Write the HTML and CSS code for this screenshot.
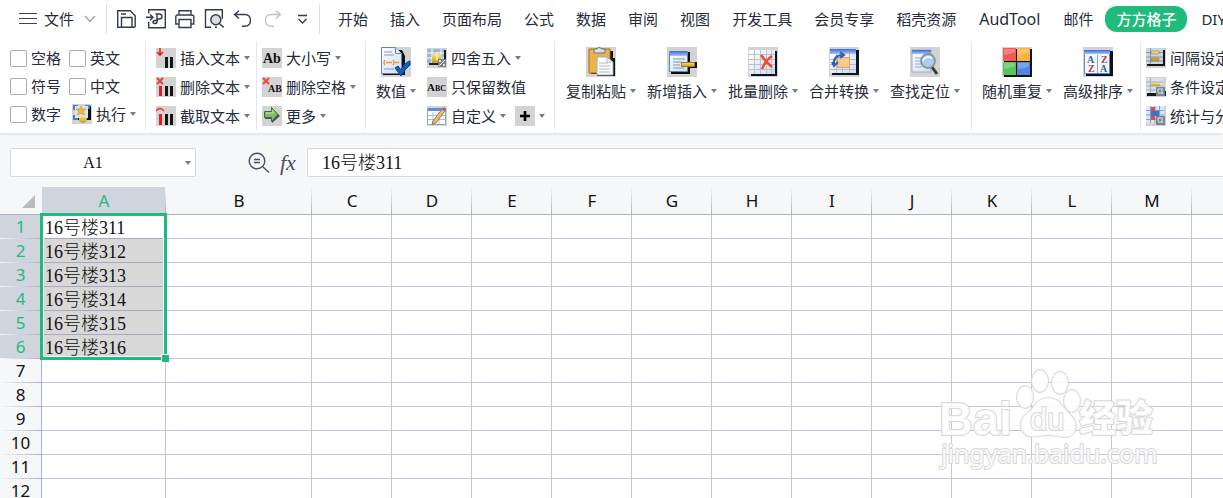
FILE: index.html
```
<!DOCTYPE html>
<html lang="zh-CN">
<head>
<meta charset="utf-8">
<title>表格 - 方方格子</title>
<link rel="stylesheet" href="styles.css">
</head>
<body>
<svg class="defs" aria-hidden="true">
  <defs>
    <linearGradient id="blue" x1="0" y1="0" x2="0" y2="1"><stop offset="0" stop-color="#3a68d8"/><stop offset="1" stop-color="#a8c6fa"/></linearGradient>
    <linearGradient id="paper" x1="0" y1="0" x2="1" y2="1"><stop offset="0" stop-color="#fff"/><stop offset="1" stop-color="#cfdcf0"/></linearGradient>
    <linearGradient id="gold" x1="0" y1="0" x2="0" y2="1"><stop offset="0" stop-color="#fbe27a"/><stop offset="1" stop-color="#c99a1c"/></linearGradient>
  </defs>
</svg>
<header class="app-top">
  <nav class="menu-bar">
    <button class="file-button">
      <svg width="18" height="14" viewBox="0 0 18 14"><path d="M0 1.500h18M0 6.500h18M0 11.500h18" stroke="#40434c" stroke-width="1.2"/></svg>
      <span>文件</span>
      <svg class="file-chevron" width="12" height="8" viewBox="0 0 12 8" fill="none"><path d="M1 1l5 5.500l5-5.500" stroke="#9a9da4" stroke-width="1.200"/></svg>
    </button>
    <div class="quick-tools">
      <button aria-label="保存"><svg viewBox="0 0 20 20"><path d="M.7 1.700h12.500l5 5v10.300q0 1.300-1.300 1.300H.7z M4.500 18V8.500h10.500V18M4 5h5"/></svg></button>
      <button aria-label="输出为PDF"><svg viewBox="0 0 20 20"><path d="M2.700 4.500V.7h16.600v18H2.700v-6M0 8.300h6M4 5.500l3 2.800l-3 2.900M9.500 5h3.500q3 0 3 2.500t-3 2.500h-2v3q0 1.500-2 1.500t-2-1.500t2-1.500h3M11 10V5"/></svg></button>
      <button aria-label="打印"><svg viewBox="0 0 20 20"><path d="M4 6V1.700h12V6M4 15H.8V8q0-2 2-2h14q2 0 2 2v7H16M4 10.500h12v8H4z"/></svg></button>
      <button aria-label="打印预览"><svg viewBox="0 0 20 20"><path d="M7 18.300H1.500V.8h16.800v9M13 18.300h-2"/><circle cx="11.800" cy="10.800" r="5" fill="#d9dde2"/><path d="M15.400 14.400l4.200 4"/></svg></button>
      <button aria-label="撤销"><svg viewBox="0 0 20 20"><path d="M6 1.800L1.500 5.500L6 9.500M2 5.500h9.500q6 0 6 5.800t-6 6H9"/></svg></button>
      <button aria-label="恢复" class="is-off"><svg viewBox="0 0 20 20"><path d="M14 1.800l4.500 3.700L14 9.500M18 5.500H9.500q-6 0-6 5.800t6 6H12"/></svg></button>
      <button aria-label="更多工具"><svg viewBox="0 0 20 20"><path d="M7 6.500h9M7.500 10l4 4l4-4"/></svg></button>
    </div>
    <div class="tabs">
      <button>开始</button><button>插入</button><button>页面布局</button><button>公式</button><button>数据</button><button>审阅</button><button>视图</button><button>开发工具</button><button>会员专享</button><button>稻壳资源</button><button class="latin">AudTool</button><button>邮件</button><button class="active">方方格子</button><button>DIY工具箱</button>
    </div>
  </nav>
  <div class="ribbon">
    <section class="group checks">
      <label><input type="checkbox">空格</label><label><input type="checkbox">英文</label>
      <label><input type="checkbox">符号</label><label><input type="checkbox">中文</label>
      <label><input type="checkbox">数字</label>
      <button class="small drop"><svg class="ico" viewBox="0 0 20 20"><path fill="#111" d="M3 2h16v14H3z"/><path fill="#4b82b8" d="M1 1h5v5H1zM13 1h5v4h-5zM1 11h5v5H1z"/><path fill="#cfe6f6" d="M3 2h13v12H3z"/><path fill="#f6b23c" stroke="#e78b22" stroke-width=".6" d="M9 2l1.500 3h3.500l-2.500 2.500l1 3.500L9 9.500l-3.500 1.500l1-3.500L4 5h3.500z"/><path fill="url(#gold)" d="M7 14l4-2l4 2l-1 4l-4 1l-3-2z"/></svg><span>执行</span></button>
    </section>
    <section class="group stack text-tools">
      <button class="small drop"><svg class="ico" viewBox="0 0 20 20"><path d="M9 9h3v11H9zM14 9h3v11h-3z" fill="#151515"/><path d="M4 0v7M1 4l3 3l3-3" fill="none" stroke="#ff1717" stroke-width="1.600"/></svg><span>插入文本</span></button>
      <button class="small drop"><svg class="ico" viewBox="0 0 20 20"><path d="M9 9h3v10H9zM14 9h3v10h-3z" fill="#151515"/><path d="M3 9h3v10H3z" fill="#e21d2b"/><path d="M1 1l6 6M7 1L1 7" stroke="#ee4338" stroke-width="2.200"/></svg><span>删除文本</span></button>
      <button class="small drop"><svg class="ico" viewBox="0 0 20 20"><path d="M9 8h3v11H9zM14 8h3v11h-3z" fill="#151515"/><path d="M3 8h3v11H3z" fill="#e21d2b"/><path d="M0 5q4-5 8 0" fill="none" stroke="#ff2626" stroke-width="1.500"/></svg><span>截取文本</span></button>
    </section>
    <section class="group stack case-tools">
      <button class="small drop"><svg class="ico" viewBox="0 0 20 20"><text class="glyph" x="1" y="15" font-size="14">Ab</text></svg><span>大小写</span></button>
      <button class="small drop"><svg class="ico" viewBox="0 0 20 20"><path d="M1 1l6 6M7 1L1 7" stroke="#f14a43" stroke-width="2.200"/><text class="glyph" x="6" y="15" font-size="10">AB</text></svg><span>删除空格</span></button>
      <button class="small drop"><svg class="ico" viewBox="0 0 20 20"><path d="M3 7h7V3l8 7l-8 7v-4H3z" fill="#46545a"/><path d="M2.500 5.500h7v-4l6.500 7l-6.500 7v-4h-7z" fill="#81bd68" stroke="#3c6842"/><path d="M4 7h7V4" fill="none" stroke="#c3e8ad"/></svg><span>更多</span></button>
    </section>
    <section class="group value-tools">
      <button class="large drop"><svg class="ico" viewBox="0 0 30 30"><path fill="#111" d="M3 3h18l3 6v19H2z"/><path fill="url(#paper)" stroke="#5f83bf" d="M.5.500h14l6 6v20H.5z"/><path fill="#e6efff" stroke="#6688b8" d="M14.500.5v6h6"/><path d="M3 5h8M3 8h10M3 22h10" stroke="#7d9cd0"/><path d="M4 13q-2 2.500 0 5M12 13q2 2.500 0 5M5 15.500h6M14 15.500h4" fill="none" stroke="#e99a40" stroke-width="1.500"/><path fill="#175dbd" stroke="#0d3f8d" d="M14 21l3-2l3 4q4-8 9-9v4q-5 4-9 11z"/></svg><span>数值</span></button>
      <div class="stack">
        <button class="small drop"><svg class="ico" viewBox="0 0 20 20"><path d="M2 2h17v15H2z" fill="#202020"/><path d="M0 1h17v14H0z" fill="#9db8d2"/><path d="M0 5h17M0 10h17M5 1v14M14 1v14" stroke="#fff"/><path d="M5 6h9v9H5z" fill="url(#gold)"/><path d="M9 4h2v8H9z" fill="#f6e9a4"/><path d="M11 11h8v8h-8z" fill="#76808b"/><path d="M12 18l6-6" stroke="#fff"/><circle cx="13" cy="13" r="1" fill="#fff"/><circle cx="17" cy="17" r="1" fill="#fff"/></svg><span>四舍五入</span></button>
        <button class="small"><svg class="ico" viewBox="0 0 20 20"><text class="glyph" x="0" y="14"><tspan font-size="11">A</tspan><tspan font-size="8">BC</tspan></text></svg><span>只保留数值</span></button>
        <div class="pair">
          <button class="small drop"><svg class="ico" viewBox="0 0 20 20"><path fill="#fff" stroke="#8fa8cb" d="M.5 2.500h18v16H.5z"/><path fill="#628bd9" d="M1 2h18v3H1z"/><path d="M1 9.500h17M1 13.500h17M6 6v12M12 6v12" stroke="#a9bddb"/><path d="M6 15L15 3l3 2L9 17l-4 1z" fill="#e9b96c" stroke="#795b3a" stroke-width=".7"/><path d="M15 3l2-2l2 2l-1 2z" fill="#b96166"/></svg><span>自定义</span></button>
          <button class="small drop plus" aria-label="添加"><svg class="ico" viewBox="0 0 20 20"><path d="M5 10h10M10 5v10" stroke="#000" stroke-width="2.600"/></svg></button>
        </div>
      </div>
    </section>
    <section class="group large-tools">
      <button class="large drop"><svg class="ico" viewBox="0 0 30 30"><path d="M5 4h22v7h2v18H11v-2H5z" fill="#111"/><path d="M3 2h21v24H3z" fill="#edb34a" stroke="#a96f16"/><path d="M8 2h3q1-3 5 0h3v4H8z" fill="#d9e0e5" stroke="#68737b"/><path d="M11 10h10l6 5v13H11z" fill="#fff" stroke="#9baaba"/><path d="M21 10v5h6M13 16h9M13 19h11M13 22h11M13 25h11" fill="none" stroke="#aeb8c7"/></svg><span>复制粘贴</span></button>
      <button class="large drop"><svg class="ico" viewBox="0 0 30 30"><path d="M4 5h19v10h7v6h-7v6H4z" fill="#111"/><path d="M2.500 4.500h18v20h-18z" fill="url(#paper)" stroke="#6583b9"/><path d="M3 4h17v5H3z" fill="url(#blue)"/><path d="M6 12h12M6 15h9M6 18h7M6 21h11" stroke="#8599b7"/><path d="M14.500 15.500h13v4h-13z" fill="url(#gold)" stroke="#9e8019"/></svg><span>新增插入</span></button>
      <button class="large drop"><svg class="ico" viewBox="0 0 30 30"><path d="M3 4h26v25H3z" fill="#10131b"/><path d="M1 3h26v24H1z" fill="url(#paper)"/><path d="M1 7.500h26M1 12.500h26M1 17.500h26M1 22.500h26M6.500 3v24M12.500 3v24M18.500 3v24M23.500 3v24" stroke="#b9c1cc"/><path d="M13 8q5 7 11 12M24 9q-7 5-10 13" fill="none" stroke="#f24a2d" stroke-width="2.500"/></svg><span>批量删除</span></button>
      <button class="large drop"><svg class="ico" viewBox="0 0 30 30"><path d="M3 3h27v25H3z" fill="#10131b"/><path d="M1 2h26v24H1z" fill="url(#paper)"/><path d="M1 2h26v5H1z" fill="url(#blue)"/><path d="M1 12.500h26M1 17.500h26M1 22.500h26M7.500 7v19M13.500 7v19M20.500 7v19" stroke="#a7bcde"/><path d="M8.500 10.500h12v10h-12z" fill="#f7c98e" stroke="#e7a050"/><path d="M5 18q-1-10 9-10M3 15l2 4l4-4M11 5l4 3l-4 3" fill="none" stroke="#315fae" stroke-width="2"/></svg><span>合并转换</span></button>
      <button class="large drop"><svg class="ico" viewBox="0 0 30 30"><path d="M2 3h19v22H2z" fill="url(#paper)" stroke="#9dacc4"/><path d="M2 3h19v4H2z" fill="url(#blue)"/><path d="M5 11h7M5 14h6M5 17h6M5 20h7" stroke="#8caade"/><path d="M22 20l5 7" stroke="#353b3d" stroke-width="3"/><circle cx="18" cy="14" r="7" fill="#aaccef" stroke="#889596" stroke-width="1.800"/><path d="M13 14q2-6 9-3" fill="none" stroke="#edf8ff" stroke-width="2"/></svg><span>查找定位</span></button>
    </section>
    <section class="group large-tools">
      <button class="large drop"><svg class="ico" viewBox="0 0 30 30"><path d="M2 2h28v28H2z" fill="#17130a"/><path d="M1 1h13v13H1z" fill="#f15b53"/><path d="M15 1h13v13H15z" fill="#f8b43e"/><path d="M1 15h13v13H1z" fill="#54c65a"/><path d="M15 15h13v13H15z" fill="#4d86e5"/><path d="M2 2h11v3q-5 3-11 3zM16 2h11v3q-5 3-11 3zM2 16h11v3q-5 3-11 3zM16 16h11v3q-5 3-11 3z" fill="#fff" opacity=".24"/></svg><span>随机重复</span></button>
      <button class="large drop"><svg class="ico" viewBox="0 0 30 30"><path d="M3 4h27v25H3z" fill="#10131b"/><path d="M1.500 3.500h25v23h-25z" fill="#f3f8ff" stroke="#688ac0"/><path d="M1 3h26v4H1z" fill="url(#blue)"/><path d="M14.500 8v18" stroke="#8aa6ce"/><g class="sort-glyph" font-size="10"><text x="4" y="16" fill="#365e9e">A</text><text x="5" y="25" fill="#a94148">Z</text><text x="18" y="16" fill="#a94148">Z</text><text x="17" y="25" fill="#365e9e">A</text></g></svg><span>高级排序</span></button>
    </section>
    <section class="group stack settings">
      <button class="small drop"><svg class="ico" viewBox="0 0 20 20"><path d="M2 2h17v16H1z" fill="#171717"/><path d="M0 0h17v16H0z" fill="#c8d5e6"/><path d="M0 4.500h17M0 9h17M0 13h17M4.500 0v16" stroke="#8294ac"/><path d="M5 3h8v3H5zM5 10h8v3H5z" fill="url(#gold)" stroke="#8d7727" stroke-width=".5"/></svg><span>间隔设定</span></button>
      <button class="small drop"><svg class="ico" viewBox="0 0 20 20"><path d="M1 14h19v5H1z" fill="#171717"/><path d="M0 1h17v15H0z" fill="#d8e2ed"/><path d="M0 5h17M0 9h17M0 13h17M4.500 1v15" stroke="#a3adb9"/><path d="M5 6h9v3H5z" fill="url(#gold)"/><path d="M10 10h9v9h-9z" fill="#7c8590"/><path d="M12 12h5M12 16h5M12 12v3M16 13v4" stroke="#e4e8ec"/></svg><span>条件设定</span></button>
      <button class="small drop"><svg class="ico" viewBox="0 0 20 20"><path d="M0 0h18v17H0z" fill="#d8e7fa"/><path d="M0 4.500h18M0 9h18M0 13.500h18M4.500 0v17M9 0v17M13.500 0v17" stroke="#7da0d3"/><path d="M5 1h4v13H5z" fill="#ee4739"/><path d="M5 5h8v5H5z" fill="#416fc9"/><path d="M10 10h9v9h-9z" fill="#7c8590"/><path d="M12 12h5M12 16h5M12 12v3M16 13v4" stroke="#e4e8ec"/></svg><span>统计与分析</span></button>
    </section>
  </div>
</header>
<div class="formula-bar">
  <div class="name-box"><input type="text" value="A1" aria-label="名称框"><button class="drop" aria-label="选择名称"></button></div>
  <div class="formula-tools">
    <button aria-label="查找"><svg width="22" height="22" viewBox="0 0 22 22" fill="none" stroke="#465064" stroke-width="1.400"><circle cx="9" cy="9" r="7.800"/><path d="M15 15l6 5.500M6 7.500h6M6 10.500h6"/></svg></button>
    <button class="fx" aria-label="插入函数">fx</button>
  </div>
  <input class="formula" type="text" value="16号楼311" aria-label="编辑栏">
</div>
<main class="sheet">
  <table>
    <colgroup><col class="c-head"><col class="c-a"><col class="c-b"><col span="12" class="c-std"></colgroup>
    <thead><tr><th class="corner"><svg width="13" height="13" viewBox="0 0 13 13" aria-label="全选"><path d="M13 0v13H0z" fill="#b9bbbd"/></svg></th><th class="on">A</th><th>B</th><th>C</th><th>D</th><th>E</th><th>F</th><th>G</th><th>H</th><th>I</th><th>J</th><th>K</th><th>L</th><th>M</th><th>N</th></tr></thead>
    <tbody>
      <tr class="on"><th>1</th><td class="current">16号楼311<span class="selection"></span></td><td></td><td></td><td></td><td></td><td></td><td></td><td></td><td></td><td></td><td></td><td></td><td></td><td></td></tr>
      <tr class="on"><th>2</th><td>16号楼312</td><td></td><td></td><td></td><td></td><td></td><td></td><td></td><td></td><td></td><td></td><td></td><td></td><td></td></tr>
      <tr class="on"><th>3</th><td>16号楼313</td><td></td><td></td><td></td><td></td><td></td><td></td><td></td><td></td><td></td><td></td><td></td><td></td><td></td></tr>
      <tr class="on"><th>4</th><td>16号楼314</td><td></td><td></td><td></td><td></td><td></td><td></td><td></td><td></td><td></td><td></td><td></td><td></td><td></td></tr>
      <tr class="on"><th>5</th><td>16号楼315</td><td></td><td></td><td></td><td></td><td></td><td></td><td></td><td></td><td></td><td></td><td></td><td></td><td></td></tr>
      <tr class="on"><th>6</th><td>16号楼316</td><td></td><td></td><td></td><td></td><td></td><td></td><td></td><td></td><td></td><td></td><td></td><td></td><td></td></tr>
      <tr><th>7</th><td></td><td></td><td></td><td></td><td></td><td></td><td></td><td></td><td></td><td></td><td></td><td></td><td></td><td></td></tr>
      <tr><th>8</th><td></td><td></td><td></td><td></td><td></td><td></td><td></td><td></td><td></td><td></td><td></td><td></td><td></td><td></td></tr>
      <tr><th>9</th><td></td><td></td><td></td><td></td><td></td><td></td><td></td><td></td><td></td><td></td><td></td><td></td><td></td><td></td></tr>
      <tr><th>10</th><td></td><td></td><td></td><td></td><td></td><td></td><td></td><td></td><td></td><td></td><td></td><td></td><td></td><td></td></tr>
      <tr><th>11</th><td></td><td></td><td></td><td></td><td></td><td></td><td></td><td></td><td></td><td></td><td></td><td></td><td></td><td></td></tr>
      <tr><th>12</th><td></td><td></td><td></td><td></td><td></td><td></td><td></td><td></td><td></td><td></td><td></td><td></td><td></td><td></td></tr>
    </tbody>
  </table>
  <svg class="watermark" width="230" height="120" viewBox="0 0 230 120">
    <g>
      <ellipse cx="92" cy="38" rx="8" ry="11"/><ellipse cx="107" cy="22" rx="8" ry="11"/><ellipse cx="127" cy="24" rx="8" ry="11"/><ellipse cx="139" cy="42" rx="8" ry="11"/>
      <path d="M115 39C105 39 103 46 97 52C88 58 86 64 89 71C94 82 106 76 115 76C125 76 138 83 142 71C145 61 137 56 132 50C127 44 125 39 115 39Z"/>
    </g>
    <text class="wm-brand" x="6" y="76" font-size="47">Bai</text>
    <text class="wm-brand wm-du" x="97" y="71" font-size="31">du</text>
    <text class="wm-cjk" x="146" y="73" font-size="37">经验</text>
    <text class="wm-url" x="8" y="104" font-size="25">jingyan.baidu.com</text>
  </svg>
</main>
</body>
</html>
```
FILE: styles.css
```
* { box-sizing: border-box; }
body {
  margin: 0;
  height: 100vh;
  overflow: hidden;
  display: flex;
  flex-direction: column;
  background: #f5f7f9;
  color: #252b3a;
  font: 15px/20px "Noto Sans", "Noto Sans CJK SC", sans-serif;
}
button, input { font: inherit; color: inherit; }
button { border: 0; padding: 0; background: none; white-space: nowrap; }
svg { display: block; flex: none; }
.defs { position: absolute; width: 0; height: 0; }

.app-top { background: #fff; flex: none; box-shadow: 0 1px 3px #d9dbe0; }
.menu-bar { display: flex; align-items: center; height: 38px; }
.file-button { display: flex; align-items: center; gap: 7px; padding-left: 19px; }
.file-chevron { margin-left: 3px; }
.quick-tools {
  display: flex;
  flex: none;
  gap: 9px;
  height: 30px;
  align-items: center;
  margin-left: 10px;
  padding: 0 8px 0 10px;
  border-left: 1px solid #dcdee2;
  border-right: 1px solid #dcdee2;
}
.quick-tools svg { width: 20px; height: 20px; fill: none; stroke: #343b4c; stroke-width: 1.4; }
.quick-tools .is-off svg { stroke: #bfc2c7; }
.tabs { display: flex; align-items: center; padding-left: 7px; }
.tabs button { flex: none; height: 26px; padding: 0 11px; }
.tabs .latin { font-size: 16px; padding: 0 12px; }
.tabs .active { background: #20bb7c; color: #fff; border-radius: 12px; font-weight: 500; margin: 0 3px 0 1px; }

.ribbon { display: flex; height: 95px; padding: 4px 0 3px; }
.group { flex: none; border-right: 1px solid #e6e7ea; padding-top: 6px; }
.stack { display: flex; flex-direction: column; align-items: flex-start; gap: 9px; }
.small { display: flex; align-items: center; gap: 4px; height: 20px; }
.ico { width: 20px; height: 20px; background: #d3d3d3; }
.drop::after {
  content: "";
  flex: none;
  border: 3px solid transparent;
  border-top: 4px solid #727b90;
  border-bottom: 0;
}
.checks {
  display: grid;
  grid-template-columns: 59px 67px;
  grid-auto-rows: 20px;
  row-gap: 8px;
  padding-left: 10px;
  width: 146px;
}
.checks label { display: flex; align-items: center; gap: 4px; }
.checks input {
  appearance: none;
  width: 17px;
  height: 17px;
  margin: 0;
  border: 1px solid #a9acb3;
  border-radius: 2px;
  background: #fff;
}
.checks .small { padding-left: 3px; }
.text-tools { padding-left: 10px; width: 111px; }
.case-tools { padding-left: 5px; width: 109px; }
.value-tools { display: flex; gap: 11px; padding-left: 10px; width: 189px; }
.pair { display: flex; gap: 9px; }
.large {
  display: grid;
  grid-template-columns: auto 6px;
  justify-items: center;
  align-items: center;
  align-content: start;
  column-gap: 4px;
  row-gap: 4px;
}
.large .ico { width: 30px; height: 30px; grid-column: 1 / 3; }
.value-tools .large { margin-top: -1px; }
.large-tools { display: flex; gap: 11px; padding: 5px 11px 0; }
.large-tools + .large-tools { padding: 5px 7px 0 10px; }
.settings { padding-left: 5px; border: 0; }
.glyph, .sort-glyph { font-family: "Liberation Serif", serif; font-weight: 700; }
.glyph { fill: #111; }

.formula-bar { display: flex; flex: none; align-items: center; height: 54px; padding: 5px 0 0 10px; }
.name-box { display: flex; align-items: center; width: 186px; height: 29px; padding-right: 4px; border: 1px solid #d5d8df; border-radius: 2px; background: #fff; }
.name-box input { flex: 1; min-width: 0; border: 0; padding: 0 10px 0 0; background: none; text-align: center; font: 16px/20px "Liberation Serif", serif; color: #111; }
.name-box .drop { display: flex; }
.formula-tools { display: flex; align-items: center; gap: 10px; padding-left: 52px; width: 111px; }
.formula-tools .fx { font: italic 22px/24px "Liberation Serif", serif; color: #465064; }
.formula { flex: 1; min-width: 0; height: 29px; border: 1px solid #d5d8df; border-right: 0; border-radius: 2px 0 0 2px; padding: 0 14px 3px; background: #fff; font: 18px/24px "Liberation Serif", "Noto Sans CJK SC", serif; font-weight: 300; color: #111; }

.sheet { position: relative; flex: 1; overflow: hidden; background: #fff; }
table { table-layout: fixed; border-spacing: 0; width: 1272px; }
.c-head { width: 42px; }
.c-a { width: 124px; }
.c-b { width: 146px; }
.c-std { width: 80px; }
th, td { height: 24px; padding: 0; white-space: nowrap; }
th { font: 17px/22px "Noto Sans", sans-serif; color: #111; }
thead th {
  height: 28px;
  border-bottom: 1px solid #a9b2c8;
  background: linear-gradient(#f5f7f9, #a9b2c8) right / 1px 100% no-repeat #f5f7f9;
}
thead .on { background-color: #d0d4dd; color: #20bb7c; }
thead .corner { background: #f5f7f9; vertical-align: bottom; padding: 0 6px 6px 22px; }
tbody th {
  border-right: 1px solid #a9b2c8;
  background: linear-gradient(90deg, #f5f7f9, #a9b2c8) bottom / 100% 1px no-repeat #f5f7f9;
}
tbody .on th { background-color: #d0d4dd; color: #20bb7c; }
td {
  border-right: 1px solid #c2c8da;
  border-bottom: 1px solid #c2c8da;
  padding: 3px 0 0 3px;
  font: 18px/20px "Liberation Serif", "Noto Sans CJK SC", serif;
  font-weight: 300;
  color: #111;
}
.on td:nth-child(2) { background: #d8d8d8; border-bottom-color: #a6abbb; }
.on td.current { position: relative; background: #fff; }
.selection {
  position: absolute;
  top: -2px;
  left: -2px;
  width: 127px;
  height: 147px;
  border: 3px solid #20bb7c;
  box-shadow: inset 0 0 0 1px #fff;
}
.selection::after {
  content: "";
  position: absolute;
  right: -5px;
  bottom: -5px;
  width: 7px;
  height: 7px;
  background: #20bb7c;
  border: solid #fff;
  border-width: 1px 0 0 1px;
}
.watermark { position: absolute; right: 60px; top: 172px; fill: #fff; fill-opacity: .85; stroke: #d8d8da; stroke-width: 2; stroke-linejoin: round; paint-order: stroke; }
.wm-brand { font-family: "Liberation Sans", sans-serif; font-weight: 700; }
.wm-du { font-weight: 400; }
.wm-cjk { font-family: "Noto Sans CJK SC", sans-serif; font-weight: 900; }
.wm-url { font-family: "Noto Sans", sans-serif; }
```
